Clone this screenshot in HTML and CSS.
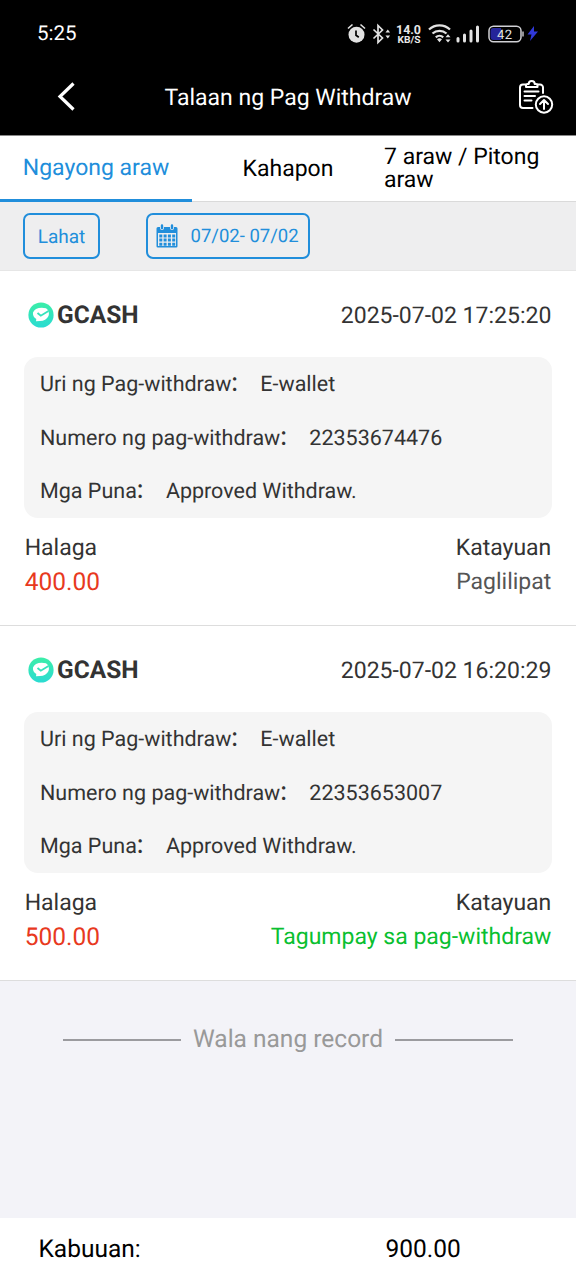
FILE: index.html
```html
<!DOCTYPE html>
<html lang="fil">
<head>
<meta charset="utf-8">
<title>Talaan ng Pag Withdraw</title>
<link rel="stylesheet" href="styles.css">
</head>
<body>
<div class="screen">
  <div class="status">
    <span class="clock">5:25</span>
    <svg class="sys" width="195" height="26" viewBox="0 0 195 26">
      <path d="M1 7.500l4.500-4M13.500 3.500l4.500 4" fill="none" stroke="#e2e2e2" stroke-width="1.600"/>
      <circle cx="9.500" cy="13.700" r="8" fill="#e2e2e2"/>
      <path d="M9 9.500v4.700l2.800 2" fill="none" stroke="#000" stroke-width="1.700"/>
      <path d="M26.500 8.500l9 8.500-4.500 4.500V4.500l4.500 4.500L26.500 17.500" fill="none" stroke="#e2e2e2" stroke-width="1.700"/>
      <path d="M38.500 11.500l2.300-3 2.300 3zM38.500 14.500l2.300 3 2.300-3z" fill="#e2e2e2"/>
      <path d="M82 8.500a15.500 15.500 0 0 1 21 0M85.500 12.500a10.500 10.500 0 0 1 14 0M88.800 16.300a5.500 5.500 0 0 1 7.400 0" fill="none" stroke="#e2e2e2" stroke-width="2.300"/>
      <path d="M90 18.300a4 4 0 0 1 5 0L92.500 21.200zM98.500 16.200l2.500-3 2.500 3zM98.500 18.500l2.500 3 2.500-3z" fill="#e2e2e2"/>
      <path d="M111 17.500v2.500M117.500 14v6M124 10v10M130.500 6v14" stroke="#e2e2e2" stroke-width="3" stroke-linecap="round"/>
      <rect x="142" y="5.300" width="32" height="15.400" rx="4.500" fill="#000" stroke="#d0d0d4" stroke-width="1.500"/>
      <path d="M146.500 7h7.500v12h-7.500a3 3 0 0 1-3-3v-6a3 3 0 0 1 3-3z" fill="#25259a"/>
      <path d="M176 10.500v5" stroke="#d0d0d4" stroke-width="1.400"/>
      <path d="M187 5l-6.500 8.500h4l-1.500 6.500 8-9.500h-4z" fill="#3038d8"/>
      <text class="sys-text" x="49" y="12.500" textLength="25" lengthAdjust="spacingAndGlyphs">14.0</text>
      <text class="sys-text kb" x="50.500" y="22" textLength="23" lengthAdjust="spacingAndGlyphs">KB/S</text>
      <text class="sys-text pct" x="150" y="17.500" textLength="15">42</text>
    </svg>
  </div>
  <header class="nav">
    <svg class="back" width="20" height="30" viewBox="0 0 20 30"><path d="M17.500 1.500L4 14.500l13.500 13" fill="none" stroke="#fff" stroke-width="3.200"/></svg>
    <h1 class="title">Talaan ng Pag Withdraw</h1>
    <svg class="export" width="36" height="36" viewBox="0 0 36 36">
      <g fill="none" stroke="#fff" stroke-width="2" stroke-linecap="round" stroke-linejoin="round">
        <path d="M7.500 5.500H5a3 3 0 0 0-3 3V26a3 3 0 0 0 3 3H14.500M19.500 5.500H22a3 3 0 0 1 3 3V14"/>
        <path d="M8 8V6.500Q8 5 9.500 5h1.200a3 3 0 0 1 6 0h1.300Q19.500 5 19.500 6.500V8z"/>
        <path d="M6.500 12.500h14M6.500 17H17M6.500 21.500h7"/>
        <circle cx="26" cy="25.500" r="8.200"/>
        <path d="M26 30v-8.500M22 25l4-4 4 4"/>
      </g>
    </svg>
  </header>
  <nav class="tabs">
    <div class="tab active"><span>Ngayong araw</span></div>
    <div class="tab"><span>Kahapon</span></div>
    <div class="tab"><span class="tab-long">7 araw / Pitong araw</span></div>
  </nav>
  <div class="filters">
    <div class="chip all">Lahat</div>
    <div class="chip date">
      <svg width="22" height="24" viewBox="0 0 22 24">
        <path fill="#218edb" fill-rule="evenodd" d="M2 3h2v1a2 2 0 0 0 4 0V3h6v1a2 2 0 0 0 4 0V3h2a1.500 1.500 0 0 1 1.500 1.500v17.700A1.300 1.300 0 0 1 20.200 23.500H1.800A1.300 1.300 0 0 1 .5 22.200V4.500A1.500 1.500 0 0 1 2 3zM2 9v13h18V9z"/>
        <path stroke="#218edb" stroke-width="2.400" stroke-linecap="round" d="M6 1.500v2.500M16 1.500v2.500"/>
        <path stroke="#218edb" stroke-width="3" stroke-dasharray="3 1.300" d="M3.300 12h16M3.300 16.100h16M3.300 20.200h16"/>
      </svg>
      <span class="date-text">07/02- 07/02</span>
    </div>
  </div>
  <main class="list">
    <article class="card">
      <div class="card-head">
        <svg class="logo" width="26" height="26" viewBox="0 0 26 26">
          <defs><linearGradient id="mint" x1="0" y1="0" x2="0" y2="1"><stop offset="0" stop-color="#3ceea8"/><stop offset="1" stop-color="#2adbd2"/></linearGradient></defs>
          <circle cx="13" cy="13" r="12.600" fill="url(#mint)"/>
          <path d="M8 7Q12 5 18 6.200 22 9 20.500 14 18 19 12 19l-4 .3.300-2.200Q4.500 14.500 5 10.500 6 8 8 7z" fill="#fff"/>
          <path d="M9.500 11l3.300 2.700L20.500 9" fill="none" stroke="#35e3bc" stroke-width="1.900"/>
        </svg>
        <strong class="bank">GCASH</strong>
        <time class="stamp">2025-07-02 17:25:20</time>
      </div>
      <div class="details">
        <div class="row"><span>Uri ng Pag-withdraw</span><span class="colon">：</span><span class="value">E-wallet</span></div>
        <div class="row"><span>Numero ng pag-withdraw</span><span class="colon">：</span><span class="value">22353674476</span></div>
        <div class="row"><span>Mga Puna</span><span class="colon">：</span><span class="value">Approved Withdraw.</span></div>
      </div>
      <div class="summary heading"><span>Halaga</span><span>Katayuan</span></div>
      <div class="summary"><span class="amount">400.00</span><span class="pending">Paglilipat</span></div>
    </article>
    <article class="card">
      <div class="card-head">
        <svg class="logo" width="26" height="26" viewBox="0 0 26 26">
          <circle cx="13" cy="13" r="12.600" fill="url(#mint)"/>
          <path d="M8 7Q12 5 18 6.200 22 9 20.500 14 18 19 12 19l-4 .3.300-2.200Q4.500 14.500 5 10.500 6 8 8 7z" fill="#fff"/>
          <path d="M9.500 11l3.300 2.700L20.500 9" fill="none" stroke="#35e3bc" stroke-width="1.900"/>
        </svg>
        <strong class="bank">GCASH</strong>
        <time class="stamp">2025-07-02 16:20:29</time>
      </div>
      <div class="details">
        <div class="row"><span>Uri ng Pag-withdraw</span><span class="colon">：</span><span class="value">E-wallet</span></div>
        <div class="row"><span>Numero ng pag-withdraw</span><span class="colon">：</span><span class="value">22353653007</span></div>
        <div class="row"><span>Mga Puna</span><span class="colon">：</span><span class="value">Approved Withdraw.</span></div>
      </div>
      <div class="summary heading"><span>Halaga</span><span>Katayuan</span></div>
      <div class="summary"><span class="amount">500.00</span><span class="success">Tagumpay sa pag-withdraw</span></div>
    </article>
    <div class="end"><i class="rule"></i><span class="end-text">Wala nang record</span><i class="rule"></i></div>
  </main>
  <footer class="total">
    <span class="total-label">Kabuuan:</span>
    <span>900.00</span>
  </footer>
</div>
</body>
</html>
```
FILE: styles.css
```css
* { box-sizing: border-box; }
body { margin: 0; font-family: Roboto, "Noto Sans CJK SC", sans-serif; color: #333; background: #f3f3f8; text-rendering: geometricPrecision; }
.screen { width: 576px; height: 1280px; display: flex; flex-direction: column; overflow: hidden; white-space: nowrap; }
.status { height: 66px; flex: none; background: #000; display: flex; justify-content: space-between; align-items: center; padding: 1px 34px 0 37px; }
.clock { color: #fff; font-size: 20.5px; padding-top: 1px; }
.sys { flex: none; }
.sys-text { font: 700 12.5px Roboto, sans-serif; fill: #e8e8e8; }
.sys-text.kb { font-size: 10px; }
.sys-text.pct { font-size: 13px; font-weight: 400; }
.nav { height: 69px; flex: none; background: #000; color: #fff; display: grid; grid-template-columns: 20px 1fr 36px; align-items: center; padding: 0 22px 7px 56px; }
.title { margin: 0; font-size: 23px; font-weight: 400; padding-left: 88.5px; }
.tabs { height: 67px; flex: none; background: #fff; border-top: 1px solid #888; display: grid; grid-template-columns: repeat(3, 192px); font-size: 23px; line-height: 23px; color: #000; }
.tab { display: flex; align-items: center; justify-content: center; border-bottom: 1px solid #dadada; }
.tab.active { border-bottom: 3px solid #218edb; color: #218edb; }
.tab-long { width: 192px; white-space: normal; padding-bottom: 2px; }
.filters { height: 69px; flex: none; background: #eeeeef; border-bottom: 1px solid #e6e6e6; display: flex; align-items: flex-start; gap: 46px; padding: 11px 23px; }
.chip { height: 46px; border: 2px solid #218edb; border-radius: 7px; color: #218edb; display: flex; align-items: center; font-size: 19px; }
.chip.all { width: 77px; justify-content: center; padding-top: 1px; }
.chip.date { width: 164px; padding-left: 8px; gap: 12.5px; }
.date-text { padding-bottom: 1px; font-size: 18.5px; }
.list { flex: 1; min-height: 0; }
.card { height: 355px; background: #fff; border-bottom: 1px solid #ddd; padding: 0 24px; }
.card-head { height: 86px; display: flex; align-items: center; padding: 2px 0.7px 0 3.5px; }
.bank { font-size: 24.5px; margin-left: 3.5px; padding-bottom: 1px; }
.stamp { margin-left: auto; font-size: 23px; }
.details { height: 161px; background: #f5f5f5; border-radius: 14px; padding: 1px 16px 0; font-size: 21.5px; display: grid; grid-template-rows: repeat(3, 53.7px); align-items: center; }
.row { display: flex; align-items: center; line-height: 30px; }
.colon { margin-left: -2px; }
.value { margin-left: 9.5px; }
.summary { height: 34px; display: flex; justify-content: space-between; align-items: center; font-size: 23px; padding: 0 0.7px; }
.summary.heading { margin-top: 12px; }
.amount { color: #e8391e; font-size: 24.5px; }
.pending { color: #555; }
.success { color: #0abf30; }
.end { height: 117px; display: flex; align-items: center; padding-left: 63px; }
.rule { width: 118px; height: 2px; background: #9b9b9f; }
.end-text { width: 214px; text-align: center; color: #999; font-size: 24.5px; padding-bottom: 3px; }
.total { height: 62px; flex: none; background: #fff; color: #000; display: flex; align-items: center; font-size: 24.5px; padding: 0 0 2px 38.5px; }
.total-label { width: 347px; }
```
